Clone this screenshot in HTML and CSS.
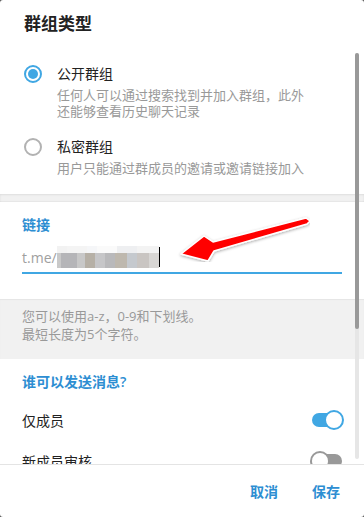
FILE: index.html
```html
<!DOCTYPE html>
<html lang="zh-CN">
<head>
  <meta charset="UTF-8">
  <title>群组类型</title>
  <link rel="stylesheet" href="styles.css">
</head>
<body>
  <div class="dialog">
    <div class="header">群组类型</div>

    <div class="content">
      <div class="options">
        <div class="option">
          <span class="radio checked"></span>
          <div class="option-text">
            <div class="option-title">公开群组</div>
            <div class="option-desc">任何人可以通过搜索找到并加入群组，此外<br>还能够查看历史聊天记录</div>
          </div>
        </div>
        <div class="option">
          <span class="radio"></span>
          <div class="option-text">
            <div class="option-title">私密群组</div>
            <div class="option-desc">用户只能通过群成员的邀请或邀请链接加入</div>
          </div>
        </div>
      </div>

      <div class="divider"></div>

      <div class="link-section">
        <div class="section-title">链接</div>
        <div class="link-input">
          <span class="prefix">t.me/</span><span class="mosaic"></span><span class="caret"></span>
        </div>
      </div>

      <div class="hint">您可以使用a-z，0-9和下划线。<br>最短长度为5个字符。</div>

      <div class="who-section">
        <div class="section-title">谁可以发送消息?</div>
        <div class="rows">
          <div class="row">
            <span>仅成员</span>
            <span class="toggle on"></span>
          </div>
          <div class="row">
            <span>新成员审核</span>
            <span class="toggle"></span>
          </div>
        </div>
      </div>

      <div class="scrollbar"><div class="thumb"></div></div>

      <svg class="arrow" width="140" height="50" viewBox="170 212 140 50">
        <defs>
          <filter id="shadow" x="-20%" y="-40%" width="140%" height="180%">
            <feDropShadow dx="0" dy="1" stdDeviation="1.5" flood-color="#000" flood-opacity="0.35"/>
          </filter>
        </defs>
        <polygon points="181,254 204,236 213,242 306,218 310,221 307,224 214,251 208,261"
                 fill="#f00" stroke="#fff" stroke-width="1.5" stroke-linejoin="round" filter="url(#shadow)"/>
      </svg>
    </div>

    <div class="footer">
      <button class="btn">取消</button>
      <button class="btn">保存</button>
    </div>
  </div>
</body>
</html>
```

FILE: styles.css
```css
html {
  background: #555;
}

body {
  margin: 0;
  font-family: "Open Sans", "Noto Sans CJK SC", sans-serif;
  color: #222;
}

.dialog {
  width: 364px;
  height: 517px;
  background: #fff;
  border-radius: 3px;
  overflow: hidden;
  display: flex;
  flex-direction: column;
}

.header {
  height: 52px;
  box-sizing: border-box;
  padding: 13px 24px 0;
  font-size: 17px;
  font-weight: 600;
  line-height: 22px;
}

.content {
  position: relative;
  height: 412px;
  overflow: hidden;
}

.options {
  padding: 12px 0 18px;
  display: flex;
  flex-direction: column;
  gap: 18px;
}

.option {
  display: flex;
  padding-left: 24px;
}

.radio {
  width: 14px;
  height: 14px;
  margin-top: 1px;
  border: 2px solid #b2b2b2;
  border-radius: 50%;
  flex-shrink: 0;
  position: relative;
}

.radio.checked {
  border-color: #40a7e3;
}

.radio.checked::after {
  content: "";
  position: absolute;
  left: 2px;
  top: 2px;
  width: 10px;
  height: 10px;
  border-radius: 50%;
  background: #40a7e3;
}

.option-text {
  margin-left: 15px;
}

.option-title {
  font-size: 14px;
  line-height: 20px;
}

.option-desc {
  font-size: 13px;
  line-height: 16px;
  color: #999;
  margin-top: 3px;
}

.divider {
  height: 8px;
  background: #f1f1f1;
  box-shadow: inset 0 1px 2px rgba(0, 0, 0, 0.08), inset 0 -1px 1px rgba(0, 0, 0, 0.04);
}

.section-title {
  font-size: 14px;
  font-weight: 600;
  line-height: 20px;
  color: #2d8ed2;
}

.link-section {
  padding: 13px 22px 25px;
}

.link-input {
  margin-top: 7px;
  width: 320px;
  height: 30px;
  border-bottom: 2px solid #40a7e3;
  display: flex;
  align-items: center;
  font-size: 14px;
  color: #a0a0a0;
}

.mosaic {
  width: 102px;
  height: 22px;
  background:
    linear-gradient(90deg, #f2f2f2 0 10px, #f4f4f4 10px 30px, #f5f6f8 30px 40px, #fafafa 40px 60px, #eeeff1 60px 80px, #f3f3f3 80px 102px) top / 100% 7px no-repeat,
    linear-gradient(90deg, #c9c9c9 0 4px, #b5b5b8 4px 20px, #c8c8c8 20px 28px, #b6b0a6 28px 38px, #c6c6c8 38px 48px, #b9b9bb 48px 58px, #beb8ae 58px 70px, #c5c9ce 70px 80px, #c9c5c2 80px 92px, #d8d6d4 92px 102px) bottom / 100% 15px no-repeat;
}

.caret {
  width: 1px;
  height: 20px;
  background: #000;
}

.hint {
  background: #f1f1f1;
  padding: 8px 22px 16px;
  font-size: 13px;
  line-height: 18px;
  color: #999;
  box-shadow: inset 0 1px 1px rgba(0, 0, 0, 0.05);
}

.who-section {
  padding: 13px 22px 0;
}

.rows {
  margin-top: 7px;
}

.row {
  height: 41px;
  display: flex;
  align-items: center;
  justify-content: space-between;
  font-size: 14px;
}

.toggle {
  position: relative;
  width: 30px;
  height: 14px;
  border-radius: 7px;
  background: #999;
}

.toggle::after {
  content: "";
  position: absolute;
  top: -3px;
  left: -2px;
  width: 16px;
  height: 16px;
  border: 2px solid #999;
  border-radius: 50%;
  background: #fff;
}

.toggle.on {
  background: #40a7e3;
}

.toggle.on::after {
  left: auto;
  right: -2px;
  border-color: #40a7e3;
}

.scrollbar {
  position: absolute;
  top: 1px;
  right: 5px;
  width: 4px;
  height: 406px;
  border-radius: 2px;
  background: #e6e6e6;
}

.thumb {
  height: 276px;
  border-radius: 2px;
  background: #999;
}

.arrow {
  position: absolute;
  left: 170px;
  top: 160px;
}

.footer {
  flex: 1;
  border-top: 1px solid #e4e4e4;
  display: flex;
  justify-content: flex-end;
  align-items: center;
  padding-right: 16px;
}

.btn {
  border: none;
  background: none;
  padding: 6px 8px;
  font-family: inherit;
  font-size: 14px;
  font-weight: 600;
  color: #2d8ed2;
  margin-left: 18px;
}
```
